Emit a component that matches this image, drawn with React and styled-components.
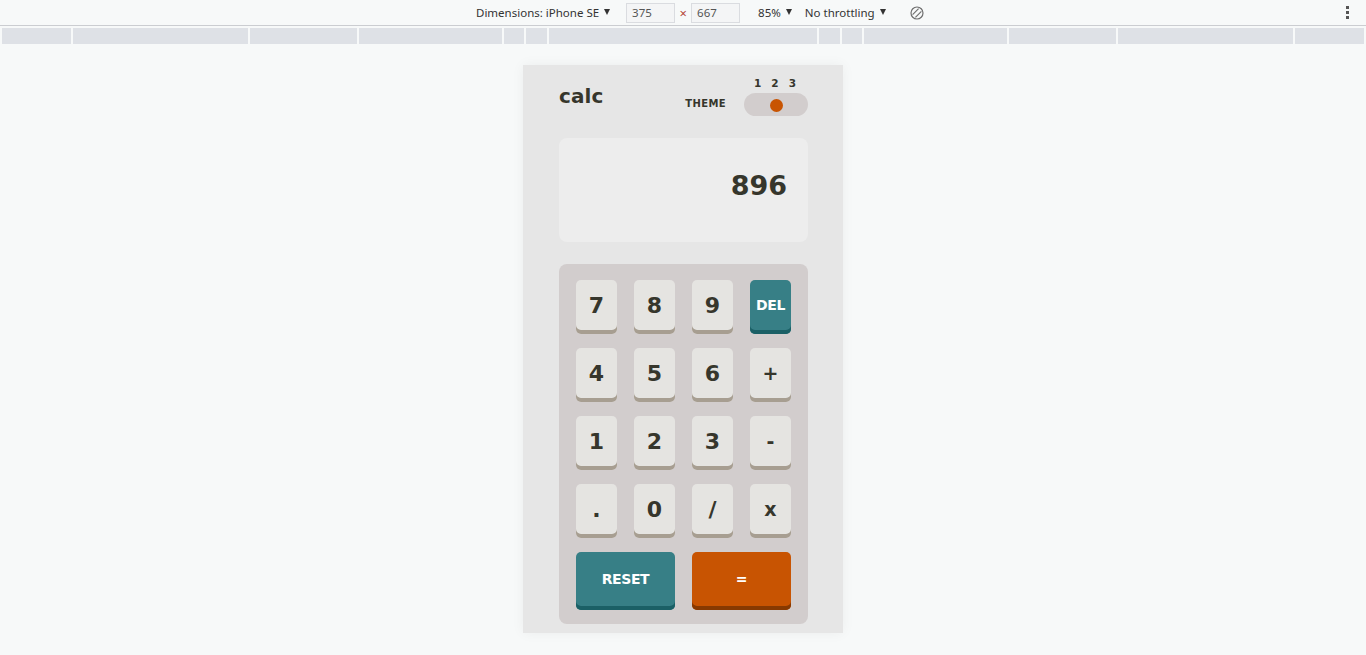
import React from "react";
import styled, { createGlobalStyle } from "styled-components";

const rulerSegments = [69, 175, 107, 143, 20, 21, 268, 21, 20, 143, 107, 175, 69];

const keys = [
    { label: "7" }, { label: "8" }, { label: "9" }, { label: "DEL", kind: "teal" },
    { label: "4" }, { label: "5" }, { label: "6" }, { label: "+", op: true },
    { label: "1" }, { label: "2" }, { label: "3" }, { label: "-", op: true },
    { label: "." }, { label: "0" }, { label: "/" }, { label: "x", op: true },
    { label: "RESET", kind: "teal", wide: true }, { label: "=", kind: "orange", wide: true },
];

const App = () => {
    return (
        <>
            <GlobalStyle />
            <Toolbar>
                <ToolText>Dimensions: iPhone SE</ToolText>
                <Caret />
                <SizeInput $ml={16}>375</SizeInput>
                <Times>×</Times>
                <SizeInput>667</SizeInput>
                <ToolText $ml={18}>85%</ToolText>
                <Caret />
                <ToolText $ml={13}>No throttling</ToolText>
                <Caret />
                <RotateIcon width="14" height="14" viewBox="0 0 14 14">
                    <circle cx="7" cy="7" r="6" fill="none" stroke="#6e6e6e" strokeWidth="1.2" />
                    <line x1="2.6" y1="8.6" x2="8.6" y2="2.6" stroke="#6e6e6e" strokeWidth="1.2" />
                    <line x1="5.4" y1="11.4" x2="11.4" y2="5.4" stroke="#6e6e6e" strokeWidth="1.2" />
                </RotateIcon>
                <MoreDots>
                    <Dot />
                    <Dot />
                    <Dot />
                </MoreDots>
            </Toolbar>
            <Ruler>
                {rulerSegments.map((w, i) => (
                    <RulerSegment key={i} $w={w} />
                ))}
            </Ruler>
            <Device>
                <Header>
                    <Logo>calc</Logo>
                    <ThemeGroup>
                        <ThemeLabel>THEME</ThemeLabel>
                        <ToggleColumn>
                            <ToggleNumbers>
                                <span>1</span>
                                <span>2</span>
                                <span>3</span>
                            </ToggleNumbers>
                            <Toggle>
                                <Knob />
                            </Toggle>
                        </ToggleColumn>
                    </ThemeGroup>
                </Header>
                <Screen>896</Screen>
                <Keypad>
                    {keys.map((k) => (
                        <Key key={k.label} $kind={k.kind} $wide={k.wide} $op={k.op}>
                            {k.label}
                        </Key>
                    ))}
                </Keypad>
            </Device>
        </>
    );
};

const GlobalStyle = createGlobalStyle`
  html, body {
    margin: 0;
    padding: 0;
    background: #f7f9f9;
  }
  body {
    height: 655px;
    overflow: hidden;
  }
`;

const Toolbar = styled.div`
  display: flex;
  align-items: center;
  height: 25px;
  padding-left: 476px;
  padding-right: 16px;
  border-bottom: 1px solid #cbcdd1;
  font-family: "Noto Sans", sans-serif;
  font-size: 11.5px;
  color: #333;
`;

const ToolText = styled.span`
  margin-left: ${(p) => p.$ml || 0}px;
  white-space: nowrap;
`;

const Caret = styled.span`
  margin-left: 5px;
  width: 0;
  height: 0;
  border-left: 3.5px solid transparent;
  border-right: 3.5px solid transparent;
  border-top: 6px solid #333;
  margin-top: -2px;
`;

const SizeInput = styled.div`
  margin-left: ${(p) => p.$ml || 0}px;
  width: 49px;
  height: 20px;
  box-sizing: border-box;
  border: 1px solid #dadce0;
  background: #f4f5f6;
  color: #555;
  padding-left: 5px;
  line-height: 18px;
`;

const Times = styled.span`
  width: 16px;
  text-align: center;
  color: #b5473a;
  font-size: 13px;
`;

const RotateIcon = styled.svg`
  margin-left: 24px;
`;

const MoreDots = styled.div`
  margin-left: auto;
  display: flex;
  flex-direction: column;
  gap: 2px;
  margin-right: 1px;
`;

const Dot = styled.span`
  width: 3px;
  height: 3px;
  background: #555;
`;

const Ruler = styled.div`
  display: flex;
  gap: 2px;
  height: 16px;
  margin: 2px 2px 0;
`;

const RulerSegment = styled.div`
  flex: none;
  width: ${(p) => p.$w}px;
  background: #dee1e6;
`;

const Device = styled.div`
  width: 320px;
  height: 568px;
  box-sizing: border-box;
  margin: 21px auto 0;
  padding: 12px 35px 0 36px;
  background: #e6e6e6;
  box-shadow: 0 0 12px rgba(0, 0, 0, 0.05);
  display: flex;
  flex-direction: column;
  font-family: "DejaVu Sans", sans-serif;
  font-weight: bold;
  color: #36362c;
`;

const Header = styled.div`
  display: flex;
  justify-content: space-between;
  align-items: flex-start;
`;

const Logo = styled.div`
  margin-top: 10px;
  font-size: 20px;
  line-height: 19px;
  letter-spacing: 0.1px;
`;

const ThemeGroup = styled.div`
  display: flex;
  align-items: flex-end;
  gap: 18px;
`;

const ThemeLabel = styled.div`
  font-size: 10px;
  line-height: 12px;
  letter-spacing: 0.4px;
  margin-bottom: 6px;
`;

const ToggleColumn = styled.div`
  display: flex;
  flex-direction: column;
  width: 64px;
`;

const ToggleNumbers = styled.div`
  display: flex;
  justify-content: space-between;
  padding: 0 12px 0 10px;
  font-size: 10.5px;
  line-height: 12px;
  margin-bottom: 4px;
`;

const Toggle = styled.div`
  height: 23px;
  border-radius: 12px;
  background: #d2cdcd;
  display: flex;
  align-items: center;
  justify-content: center;
`;

const Knob = styled.span`
  width: 13px;
  height: 13px;
  border-radius: 50%;
  background: #c85402;
  margin-left: 1px;
  margin-top: 1px;
`;

const Screen = styled.div`
  margin-top: 22px;
  height: 104px;
  box-sizing: border-box;
  padding: 35px 21px 0 0;
  border-radius: 8px;
  background: #ededed;
  text-align: right;
  font-size: 27px;
  line-height: 26px;
`;

const Keypad = styled.div`
  margin-top: 22px;
  padding: 16px 17px 14px;
  border-radius: 8px;
  background: #d2cdcd;
  display: grid;
  grid-template-columns: repeat(4, 1fr);
  grid-template-rows: 54px 54px 54px 54px 58px;
  column-gap: 17px;
  row-gap: 14px;
`;

const keyColors = {
    default: ["#e5e4e1", "#a79e91", "#36362c"],
    teal: ["#377f86", "#1b6066", "#ffffff"],
    orange: ["#c85402", "#873901", "#ffffff"],
};

const Key = styled.button`
  grid-column: ${(p) => (p.$wide ? "span 2" : "auto")};
  border: none;
  border-radius: 5px;
  padding: 0 0 4px;
  display: flex;
  align-items: center;
  justify-content: center;
  font-family: "DejaVu Sans", sans-serif;
  font-weight: bold;
  font-size: ${(p) => (p.$kind ? "14px" : p.$op ? "19px" : "22px")};
  letter-spacing: ${(p) => (p.$kind ? "-0.4px" : "0")};
  background: ${(p) => keyColors[p.$kind || "default"][0]};
  box-shadow: inset 0 -4px 0 ${(p) => keyColors[p.$kind || "default"][1]};
  color: ${(p) => keyColors[p.$kind || "default"][2]};
  cursor: pointer;
`;

export default App;
